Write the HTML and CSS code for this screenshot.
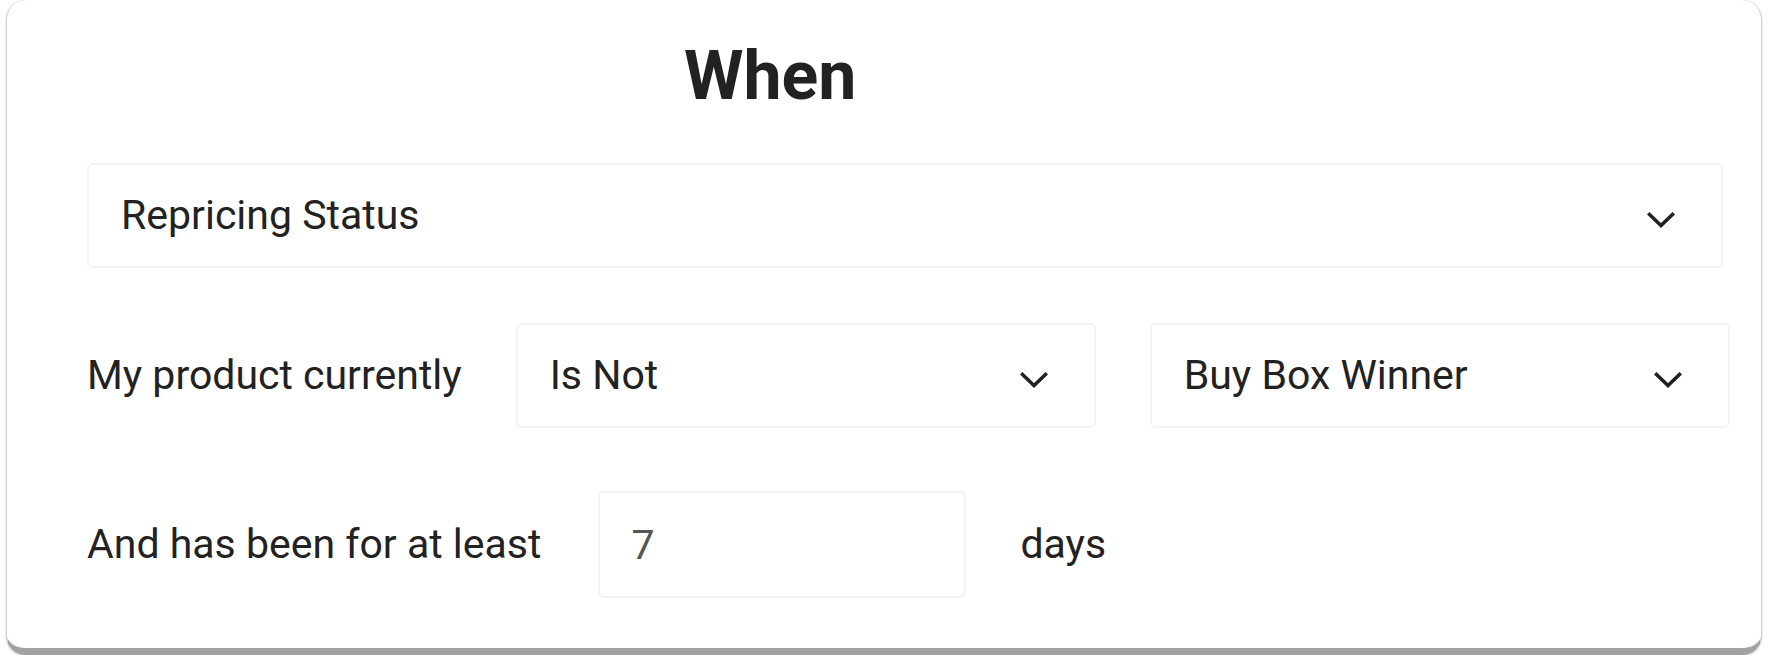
FILE: index.html
```html
<!DOCTYPE html>
<html lang="en">
<head>
<meta charset="utf-8">
<title>When</title>
<link rel="stylesheet" href="styles.css">
</head>
<body>
<div class="card">
  <h1 class="title">When</h1>

  <div class="select select-wide">
    <span class="select-text">Repricing Status</span>
    <svg class="chev" viewBox="0 0 28 16" width="28" height="16"><polyline points="2.5,2.5 14,13.5 25.5,2.5"/></svg>
  </div>

  <div class="row row-product">
    <span class="label">My product currently</span>
    <div class="select select-half">
      <span class="select-text">Is Not</span>
      <svg class="chev" viewBox="0 0 28 16" width="28" height="16"><polyline points="2.5,2.5 14,13.5 25.5,2.5"/></svg>
    </div>
    <div class="select select-half">
      <span class="select-text">Buy Box Winner</span>
      <svg class="chev" viewBox="0 0 28 16" width="28" height="16"><polyline points="2.5,2.5 14,13.5 25.5,2.5"/></svg>
    </div>
  </div>

  <div class="row row-days">
    <span class="label">And has been for at least</span>
    <input class="num" type="text" value="7">
    <span class="label">days</span>
  </div>
</div>
</body>
</html>
```

FILE: styles.css
```css
* {
  box-sizing: border-box;
}

html, body {
  margin: 0;
  padding: 0;
  background: #ffffff;
}

body {
  font-family: Roboto, "Liberation Sans", Arial, sans-serif;
  color: #222222;
}

.card {
  width: 1756px;
  height: 655px;
  margin-left: 6px;
  border: 1px solid #d2d2d2;
  border-top: none;
  border-bottom: 7px solid #a2a2a2;
  border-radius: 20px;
  background: #ffffff;
  box-shadow: 0 2px 2px rgba(0, 0, 0, 0.12), 0 0 1px 1px rgba(0, 0, 0, 0.05);
  padding: 41px 0 0 80px;
}

.title {
  margin: 0 0 0 597px;
  font-size: 68px;
  line-height: 70px;
  height: 70px;
  font-weight: 700;
  color: #222222;
}

.select {
  display: flex;
  align-items: center;
  justify-content: space-between;
  height: 105px;
  padding: 0 46px 0 32px;
  border: 2px solid #f3f3f3;
  border-radius: 6px;
  background: #ffffff;
  font-size: 41px;
}

.select-wide {
  width: 1636px;
  margin-top: 52px;
}

.select-text {
  line-height: 1;
}

.chev {
  display: block;
  margin-top: 8px;
  fill: none;
  stroke: #222222;
  stroke-width: 3.6;
  stroke-linecap: square;
  stroke-linejoin: miter;
}

.row {
  display: flex;
  align-items: center;
  gap: 54px;
  font-size: 41px;
}

.row-product {
  margin-top: 55px;
}

.select-half {
  width: 580px;
}

.row-days {
  margin-top: 63px;
}

.label {
  line-height: 1;
  color: #222222;
}

.num {
  width: 368px;
  height: 107px;
  margin-left: 3px;
  padding: 0 0 0 31px;
  border: 2px solid #f3f3f3;
  border-radius: 6px;
  font-family: Roboto, "Liberation Sans", Arial, sans-serif;
  font-size: 41px;
  color: #555555;
  background: #ffffff;
  outline: none;
}
```
